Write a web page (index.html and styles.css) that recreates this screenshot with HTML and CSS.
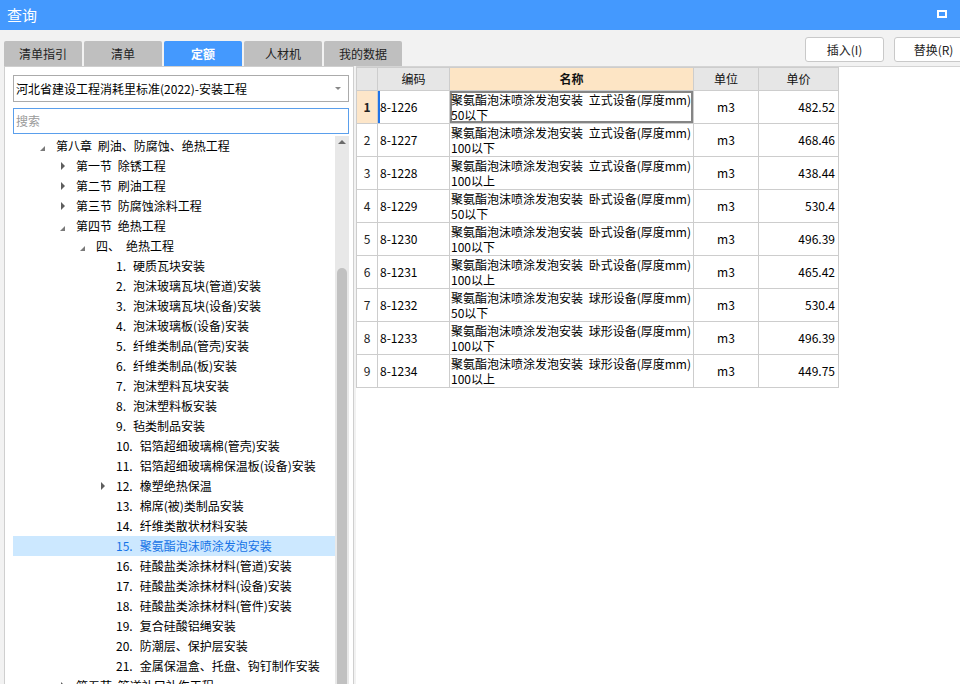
FILE: index.html
```html
<!DOCTYPE html>
<html lang="zh-CN">
<head>
<meta charset="utf-8">
<title>查询</title>
<link rel="stylesheet" href="styles.css">
</head>
<body>
<div class="titlebar">
  <span class="title">查询</span>
  <span class="max-icon"></span>
</div>
<div class="toolbar">
  <div class="tabs">
    <div class="tab">清单指引</div>
    <div class="tab">清单</div>
    <div class="tab active">定额</div>
    <div class="tab">人材机</div>
    <div class="tab">我的数据</div>
  </div>
  <div class="actions">
    <div class="btn">插入(I)</div>
    <div class="btn">替换(R)</div>
  </div>
</div>
<div class="main">
  <div class="left">
    <div class="select"><span class="select-text">河北省建设工程消耗里标准(2022)-安装工程</span><span class="select-arrow"></span></div>
    <div class="search"><span class="placeholder">搜索</span></div>
    <div class="tree-wrap">
      <div class="tree">
        <div class="row l1"><span class="tg"><i class="open"></i></span><span>第八章 刷油、防腐蚀、绝热工程</span></div>
        <div class="row l2"><span class="tg"><i class="closed"></i></span><span>第一节 除锈工程</span></div>
        <div class="row l2"><span class="tg"><i class="closed"></i></span><span>第二节 刷油工程</span></div>
        <div class="row l2"><span class="tg"><i class="closed"></i></span><span>第三节 防腐蚀涂料工程</span></div>
        <div class="row l2"><span class="tg"><i class="open"></i></span><span>第四节 绝热工程</span></div>
        <div class="row l3"><span class="tg"><i class="open"></i></span><span class="gap">四、</span><span>绝热工程</span></div>
        <div class="row l4"><span class="tg"></span><span class="num">1.</span><span>硬质瓦块安装</span></div>
        <div class="row l4"><span class="tg"></span><span class="num">2.</span><span>泡沫玻璃瓦块(管道)安装</span></div>
        <div class="row l4"><span class="tg"></span><span class="num">3.</span><span>泡沫玻璃瓦块(设备)安装</span></div>
        <div class="row l4"><span class="tg"></span><span class="num">4.</span><span>泡沫玻璃板(设备)安装</span></div>
        <div class="row l4"><span class="tg"></span><span class="num">5.</span><span>纤维类制品(管壳)安装</span></div>
        <div class="row l4"><span class="tg"></span><span class="num">6.</span><span>纤维类制品(板)安装</span></div>
        <div class="row l4"><span class="tg"></span><span class="num">7.</span><span>泡沫塑料瓦块安装</span></div>
        <div class="row l4"><span class="tg"></span><span class="num">8.</span><span>泡沫塑料板安装</span></div>
        <div class="row l4"><span class="tg"></span><span class="num">9.</span><span>毡类制品安装</span></div>
        <div class="row l4"><span class="tg"></span><span class="num">10.</span><span>铝箔超细玻璃棉(管壳)安装</span></div>
        <div class="row l4"><span class="tg"></span><span class="num">11.</span><span>铝箔超细玻璃棉保温板(设备)安装</span></div>
        <div class="row l4"><span class="tg"><i class="closed"></i></span><span class="num">12.</span><span>橡塑绝热保温</span></div>
        <div class="row l4"><span class="tg"></span><span class="num">13.</span><span>棉席(被)类制品安装</span></div>
        <div class="row l4"><span class="tg"></span><span class="num">14.</span><span>纤维类散状材料安装</span></div>
        <div class="row l4 selected"><span class="tg"></span><span class="num">15.</span><span>聚氨酯泡沫喷涂发泡安装</span></div>
        <div class="row l4"><span class="tg"></span><span class="num">16.</span><span>硅酸盐类涂抹材料(管道)安装</span></div>
        <div class="row l4"><span class="tg"></span><span class="num">17.</span><span>硅酸盐类涂抹材料(设备)安装</span></div>
        <div class="row l4"><span class="tg"></span><span class="num">18.</span><span>硅酸盐类涂抹材料(管件)安装</span></div>
        <div class="row l4"><span class="tg"></span><span class="num">19.</span><span>复合硅酸铝绳安装</span></div>
        <div class="row l4"><span class="tg"></span><span class="num">20.</span><span>防潮层、保护层安装</span></div>
        <div class="row l4"><span class="tg"></span><span class="num">21.</span><span>金属保温盒、托盘、钩钉制作安装</span></div>
        <div class="row l2"><span class="tg"><i class="closed"></i></span><span>第五节 管道补口补伤工程</span></div>
      </div>
      <div class="scrollbar">
        <span class="sb-up"></span>
        <span class="sb-thumb"></span>
      </div>
    </div>
  </div>
  <div class="right">
    <table class="grid">
      <colgroup>
        <col class="c-no"><col class="c-code"><col class="c-name"><col class="c-unit"><col class="c-price">
      </colgroup>
      <thead>
        <tr><th></th><th>编码</th><th class="sel-col">名称</th><th>单位</th><th>单价</th></tr>
      </thead>
      <tbody>
        <tr class="cur"><td class="no">1</td><td class="code">8-1226</td><td class="name">聚氨酯泡沫喷涂发泡安装 立式设备(厚度mm)<br>50以下</td><td class="unit">m3</td><td class="price">482.52</td></tr>
        <tr><td class="no">2</td><td class="code">8-1227</td><td class="name">聚氨酯泡沫喷涂发泡安装 立式设备(厚度mm)<br>100以下</td><td class="unit">m3</td><td class="price">468.46</td></tr>
        <tr><td class="no">3</td><td class="code">8-1228</td><td class="name">聚氨酯泡沫喷涂发泡安装 立式设备(厚度mm)<br>100以上</td><td class="unit">m3</td><td class="price">438.44</td></tr>
        <tr><td class="no">4</td><td class="code">8-1229</td><td class="name">聚氨酯泡沫喷涂发泡安装 卧式设备(厚度mm)<br>50以下</td><td class="unit">m3</td><td class="price">530.4</td></tr>
        <tr><td class="no">5</td><td class="code">8-1230</td><td class="name">聚氨酯泡沫喷涂发泡安装 卧式设备(厚度mm)<br>100以下</td><td class="unit">m3</td><td class="price">496.39</td></tr>
        <tr><td class="no">6</td><td class="code">8-1231</td><td class="name">聚氨酯泡沫喷涂发泡安装 卧式设备(厚度mm)<br>100以上</td><td class="unit">m3</td><td class="price">465.42</td></tr>
        <tr><td class="no">7</td><td class="code">8-1232</td><td class="name">聚氨酯泡沫喷涂发泡安装 球形设备(厚度mm)<br>50以下</td><td class="unit">m3</td><td class="price">530.4</td></tr>
        <tr><td class="no">8</td><td class="code">8-1233</td><td class="name">聚氨酯泡沫喷涂发泡安装 球形设备(厚度mm)<br>100以下</td><td class="unit">m3</td><td class="price">496.39</td></tr>
        <tr><td class="no">9</td><td class="code">8-1234</td><td class="name">聚氨酯泡沫喷涂发泡安装 球形设备(厚度mm)<br>100以上</td><td class="unit">m3</td><td class="price">449.75</td></tr>
      </tbody>
    </table>
  </div>
</div>
</body>
</html>
```

FILE: styles.css
```css
* { box-sizing: border-box; }

html, body {
  margin: 0;
  padding: 0;
}

body {
  width: 960px;
  height: 684px;
  overflow: hidden;
  background: #f2f2f2;
  font-family: "Noto Sans CJK SC", "Liberation Sans", sans-serif;
  font-size: 12px;
  line-height: 14px;
  color: #000;
}

/* title bar */
.titlebar {
  height: 30px;
  background: #4499fe;
  display: flex;
  align-items: center;
  padding: 0 13px 0 7px;
}

.title {
  color: #fff;
  font-size: 15px;
  line-height: 18px;
}

.max-icon {
  margin-left: auto;
  width: 10px;
  height: 8px;
  border: 2px solid #fff;
  margin-top: -2px;
}

/* toolbar with tabs and buttons */
.toolbar {
  height: 36px;
  display: flex;
  align-items: flex-end;
  padding-left: 4px;
}

.tabs {
  display: flex;
  gap: 2px;
}

.tab {
  width: 78px;
  height: 25px;
  background: #bfbfbf;
  border-radius: 2px 2px 0 0;
  display: flex;
  align-items: center;
  justify-content: center;
  color: #222;
  font-size: 12px;
}

.tab.active {
  background: #4499fe;
  color: #fff;
  font-weight: bold;
}

.actions {
  margin-left: auto;
  margin-right: -13px;
  align-self: flex-start;
  margin-top: 7px;
  display: flex;
  gap: 10px;
}

.btn {
  width: 79px;
  height: 25px;
  background: #fff;
  border: 1px solid #c9c9c9;
  border-radius: 3px;
  display: flex;
  align-items: center;
  justify-content: center;
  color: #222;
}

/* main area */
.main {
  height: 618px;
  display: flex;
  gap: 2px;
  padding-left: 4px;
}

.left {
  width: 350px;
  height: 100%;
  background: #fff;
  border: 1px solid #cfcfcf;
  border-bottom: none;
  padding: 8px 4px 0 8px;
  display: flex;
  flex-direction: column;
}

.select {
  height: 27px;
  border: 1px solid #ababab;
  display: flex;
  align-items: center;
  padding-left: 2px;
  padding-right: 7px;
  background: #fff;
}

.select-text {
  color: #000;
}

.select-arrow {
  margin-left: auto;
  width: 0;
  height: 0;
  border-left: 3px solid transparent;
  border-right: 3px solid transparent;
  border-top: 3px solid #888;
}

.search {
  margin-top: 6px;
  height: 26px;
  border: 1px solid #5a9fec;
  display: flex;
  align-items: center;
  padding-left: 2px;
}

.placeholder {
  color: #9a9a9a;
}

.tree-wrap {
  margin-top: 2px;
  flex: 1;
  min-height: 0;
  display: flex;
  overflow: hidden;
}

.tree {
  width: 322px;
  flex: none;
  word-spacing: 3px;
}

.row {
  height: 20px;
  display: flex;
  align-items: center;
  white-space: nowrap;
}

.row.l1 { padding-left: 27px; }
.row.l2 { padding-left: 47px; }
.row.l3 { padding-left: 67px; }
.row.l4 { padding-left: 87px; }

.row.selected {
  background: #cce8ff;
  color: #1673e6;
}

.tg {
  width: 16px;
  height: 20px;
  flex: none;
  display: flex;
  align-items: center;
}

.tg .open {
  display: block;
  width: 0;
  height: 0;
  border-left: 5px solid transparent;
  border-bottom: 5px solid #7a7a7a;
  margin-top: 5px;
}

.tg .closed {
  display: block;
  width: 0;
  height: 0;
  border-top: 4px solid transparent;
  border-bottom: 4px solid transparent;
  border-left: 4px solid #5e5e5e;
  margin-left: 1px;
}

.num {
  margin-right: 7px;
}

.gap {
  margin-right: 6px;
}

.scrollbar {
  width: 14px;
  flex: none;
  background: #e8e8e8;
  display: flex;
  flex-direction: column;
  align-items: center;
}

.sb-up {
  margin-top: 4px;
  width: 0;
  height: 0;
  border-left: 4px solid transparent;
  border-right: 4px solid transparent;
  border-bottom: 4px solid #6a6a6a;
}

.sb-thumb {
  margin-top: 124px;
  width: 10px;
  flex: 1;
  background: #c1c1c1;
  border-radius: 5px 5px 0 0;
}

/* right grid */
.right {
  flex: 1;
  height: 100%;
  background: #fff;
  border-top: 1px solid #d4d4d4;
}

.grid {
  border-collapse: collapse;
  table-layout: fixed;
  width: 482px;
  border: 1px solid #cdcdcd;
  word-spacing: 3px;
}

.c-no { width: 21px; }
.c-code { width: 72px; }
.c-name { width: 244px; }
.c-unit { width: 65px; }
.c-price { width: 80px; }

.grid th,
.grid td {
  border: 1px solid #cdcdcd;
  padding: 0;
  white-space: nowrap;
  overflow: hidden;
}

.grid th {
  height: 23px;
  background: #e6e6e6;
  font-weight: normal;
  color: #111;
  text-align: center;
}

.grid th.sel-col {
  background: #fde5c5;
  font-weight: bold;
}

.grid td {
  height: 33px;
  vertical-align: middle;
}

.grid td.no {
  text-align: center;
  color: #222;
}

.grid td.code {
  padding-left: 2px;
}

.grid td.name {
  padding-left: 1px;
  line-height: 15px;
}

.grid td.unit {
  text-align: center;
}

.grid td.price {
  text-align: right;
  padding-right: 3px;
}

.grid tr.cur td.no {
  background: #fde6c9;
  font-weight: bold;
}

.grid tr.cur td.code {
  box-shadow: inset 2px 0 0 #2274e8;
}

.grid tr.cur td.name {
  box-shadow: inset 0 0 0 2px #858585;
}
```
